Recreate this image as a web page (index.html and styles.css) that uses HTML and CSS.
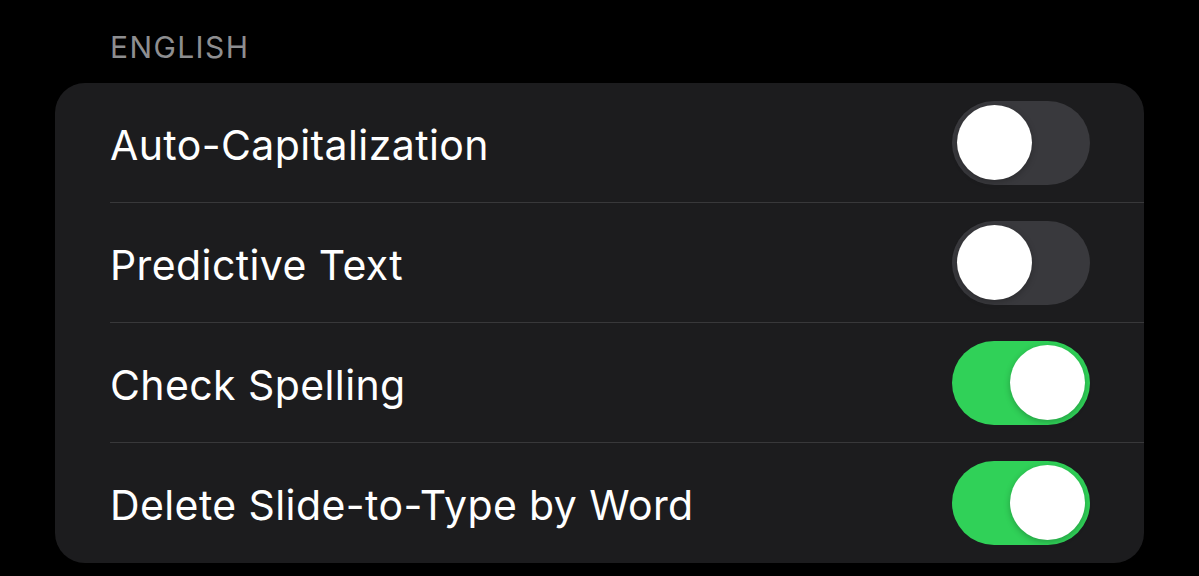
FILE: index.html
```html
<!DOCTYPE html>
<html lang="en">
<head>
<meta charset="utf-8">
<link rel="stylesheet" href="styles.css">
</head>
<body>
  <div class="page">
    <div class="section-header">ENGLISH</div>
    <div class="card">
      <div class="row">
        <span class="label">Auto-Capitalization</span>
        <span class="toggle"><span class="knob"></span></span>
      </div>
      <div class="row">
        <span class="label">Predictive Text</span>
        <span class="toggle"><span class="knob"></span></span>
      </div>
      <div class="row">
        <span class="label">Check Spelling</span>
        <span class="toggle on"><span class="knob"></span></span>
      </div>
      <div class="row">
        <span class="label">Delete Slide-to-Type by Word</span>
        <span class="toggle on"><span class="knob"></span></span>
      </div>
    </div>
  </div>
</body>
</html>
```
FILE: styles.css
```css
html, body {
  margin: 0;
  padding: 0;
  background: #000;
  height: 100%;
  overflow: hidden;
}
.page {
  font-family: Inter, "Noto Sans", "Liberation Sans", sans-serif;
  color: #fff;
  padding: 27px 55px 0 55px;
}
.section-header {
  padding-left: 55px;
  font-size: 30px;
  color: #8e8e90;
  letter-spacing: 1.4px;
  line-height: 40px;
  height: 40px;
  margin-bottom: 16px;
}
.card {
  width: 1089px;
  background: #1c1c1e;
  border-radius: 30px;
  overflow: hidden;
}
.row {
  position: relative;
  display: flex;
  align-items: center;
  justify-content: space-between;
  height: 119px;
  padding: 0 54px 0 55px;
  border-bottom: 1px solid transparent;
}
.row::after {
  content: "";
  position: absolute;
  left: 55px;
  right: 0;
  bottom: -1px;
  height: 1px;
  background: #38383a;
}
.row:last-child::after {
  display: none;
}
.label {
  font-size: 41px;
  letter-spacing: 0.4px;
  color: #fff;
  margin-top: 4px;
}
.toggle {
  position: relative;
  display: flex;
  align-items: center;
  width: 138px;
  height: 84px;
  border-radius: 42px;
  background: #39393d;
  box-sizing: border-box;
  padding: 0 5px;
}
.knob {
  width: 75px;
  height: 75px;
  border-radius: 50%;
  background: #fff;
  box-shadow: 0 2px 6px rgba(0,0,0,0.25);
}
.toggle.on {
  background: #30d158;
  justify-content: flex-end;
}
```
